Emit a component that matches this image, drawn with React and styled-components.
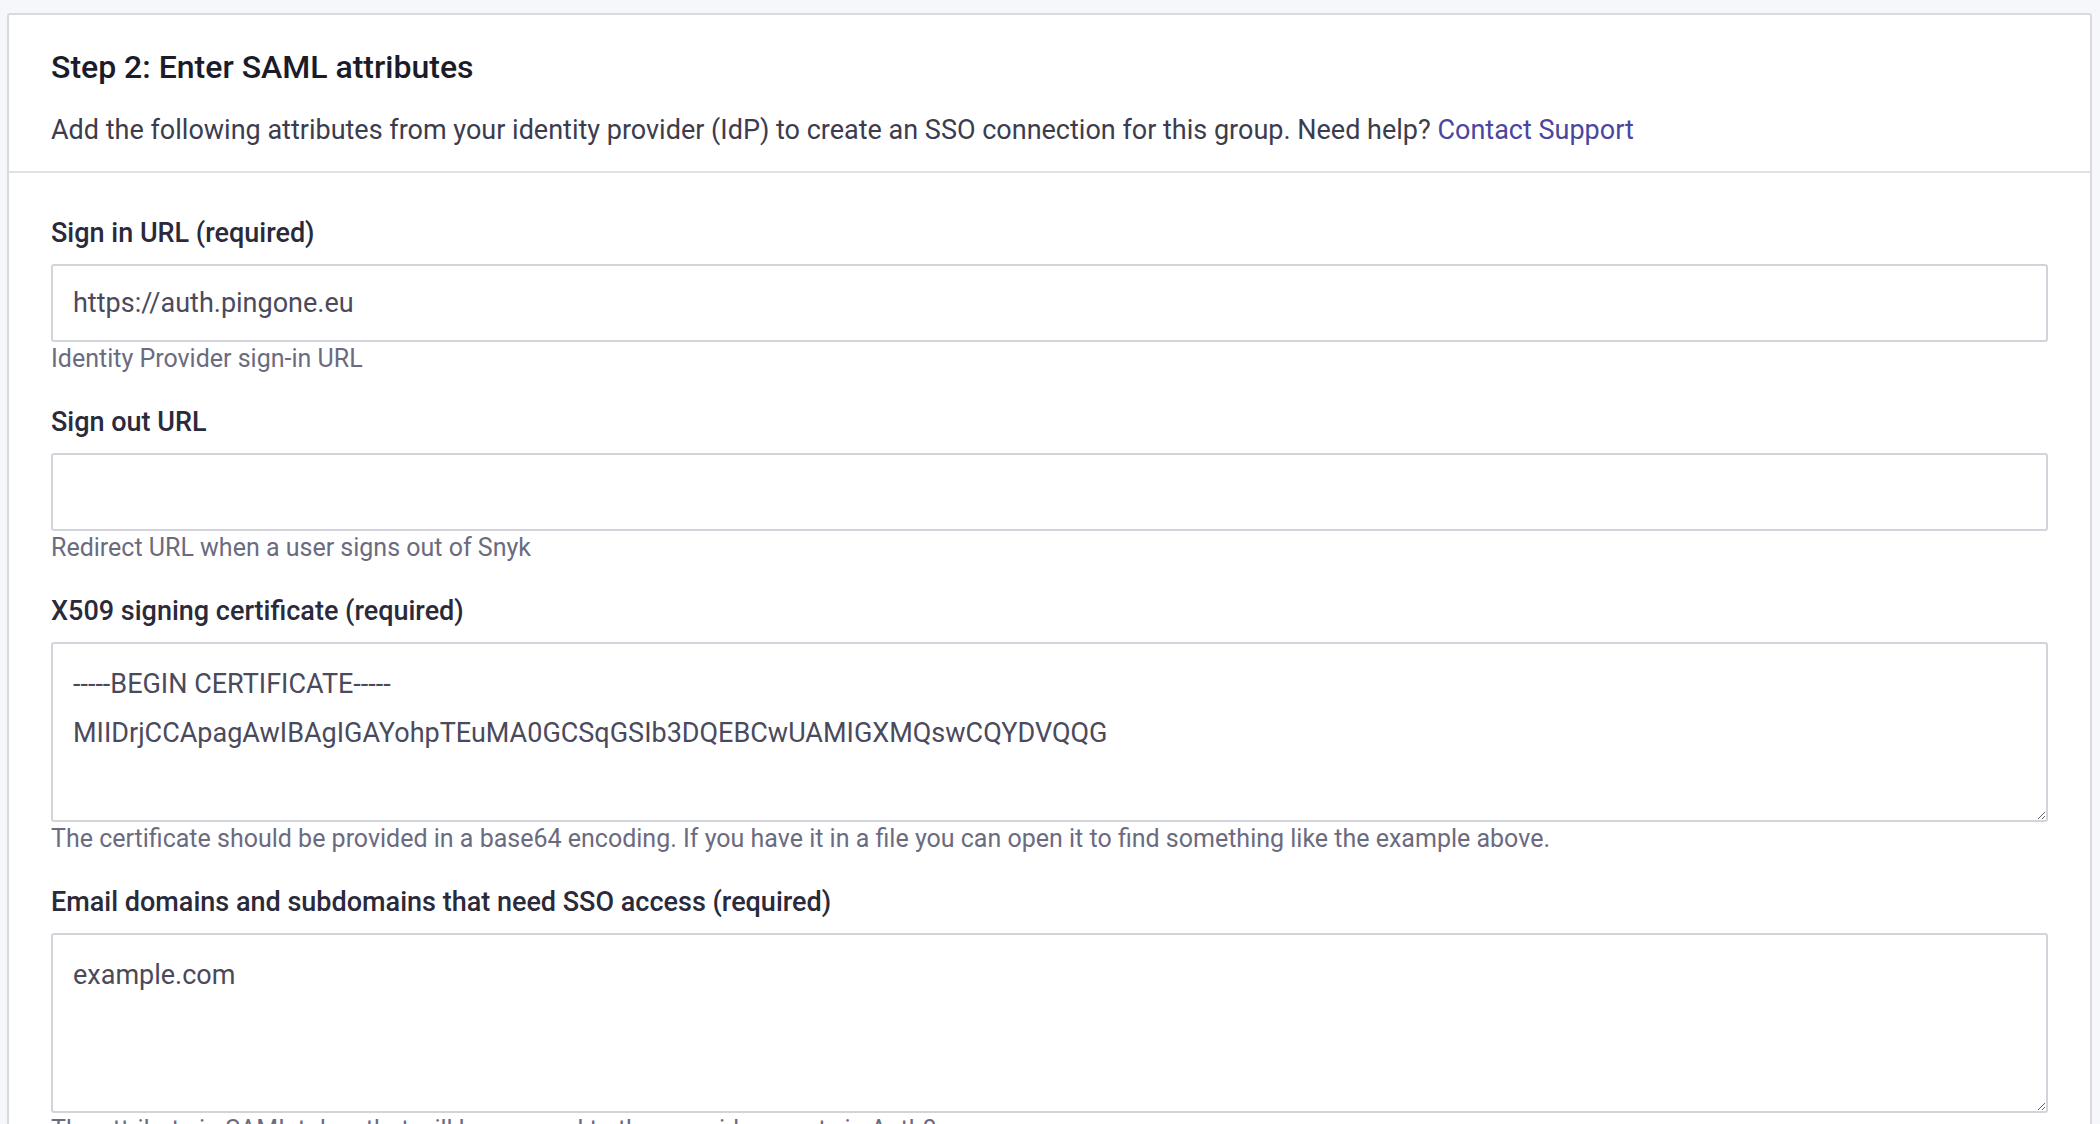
import React from 'react'
import styled, { createGlobalStyle } from 'styled-components'

const GlobalStyle = createGlobalStyle`
  html, body {
    margin: 0;
    padding: 0;
    background: #f6f7fb;
    font-family: Roboto, "Liberation Sans", Arial, sans-serif;
  }
`

const fields = [
  {
    id: 'signin',
    label: 'Sign in URL (required)',
    value: 'https://auth.pingone.eu',
    help: 'Identity Provider sign-in URL',
  },
  {
    id: 'signout',
    label: 'Sign out URL',
    value: '',
    help: 'Redirect URL when a user signs out of Snyk',
  },
  {
    id: 'cert',
    label: 'X509 signing certificate (required)',
    value: '-----BEGIN CERTIFICATE-----\nMIIDrjCCApagAwIBAgIGAYohpTEuMA0GCSqGSIb3DQEBCwUAMIGXMQswCQYDVQQG',
    help: 'The certificate should be provided in a base64 encoding. If you have it in a file you can open it to find something like the example above.',
    multiline: true,
  },
  {
    id: 'domains',
    label: 'Email domains and subdomains that need SSO access (required)',
    value: 'example.com',
    help: 'The attribute in SAML token that will be mapped to the user_id property in Auth0',
    multiline: true,
  },
]

export default function App() {
  return (
    <>
      <GlobalStyle />
      <Page>
        <Card>
          <Header>
            <Title>Step 2: Enter SAML attributes</Title>
            <Description>
              Add the following attributes from your identity provider (IdP) to create an SSO
              connection for this group. Need help? <Link href="#">Contact Support</Link>
            </Description>
          </Header>
          <Body>
            {fields.map((f) => (
              <Field key={f.id}>
                <Label htmlFor={f.id}>{f.label}</Label>
                {f.multiline ? (
                  <TextArea id={f.id} defaultValue={f.value} />
                ) : (
                  <Input id={f.id} defaultValue={f.value} />
                )}
                <Help>{f.help}</Help>
              </Field>
            ))}
          </Body>
        </Card>
      </Page>
    </>
  )
}

const Page = styled.div`
  padding: 13px 8px 0 7px;
  height: 1124px;
  box-sizing: border-box;
  overflow: hidden;
`

const Card = styled.section`
  background: #ffffff;
  border: 2px solid #d9d9e1;
  border-bottom: none;
  border-radius: 3px 3px 0 0;
`

const Header = styled.header`
  padding: 33px 42px 24px;
  border-bottom: 2px solid #e0e0e6;
`

const Title = styled.h2`
  margin: 0;
  font-size: 32px;
  line-height: 38px;
  font-weight: 500;
  color: #1b1b29;
`

const Description = styled.p`
  margin: 27px 0 0;
  font-size: 27px;
  line-height: 34px;
  color: #3c3c4e;
`

const Link = styled.a`
  color: #4b45a1;
  text-decoration: none;
`

const Body = styled.div`
  padding: 43px 42px 0;
  display: flex;
  flex-direction: column;
  gap: 31px;
`

const Field = styled.div`
  display: flex;
  flex-direction: column;
`

const Label = styled.label`
  font-size: 27px;
  line-height: 34px;
  font-weight: 500;
  color: #2a2a3a;
  margin-bottom: 14px;
`

const inputBase = `
  box-sizing: border-box;
  width: 100%;
  border: 2px solid #d3d3db;
  border-radius: 3px;
  background: #ffffff;
  font-family: Roboto, "Liberation Sans", Arial, sans-serif;
  font-size: 27px;
  color: #4a4a5c;
  padding: 0 20px;
  outline: none;
`

const Input = styled.input`
  ${inputBase}
  height: 78px;
`

const TextArea = styled.textarea`
  ${inputBase}
  height: 180px;
  padding-top: 16px;
  line-height: 49px;
  resize: vertical;
  white-space: pre;
  overflow: hidden;
`

const Help = styled.div`
  margin-top: 2px;
  font-size: 25px;
  line-height: 30px;
  color: #6b6b7f;
`
